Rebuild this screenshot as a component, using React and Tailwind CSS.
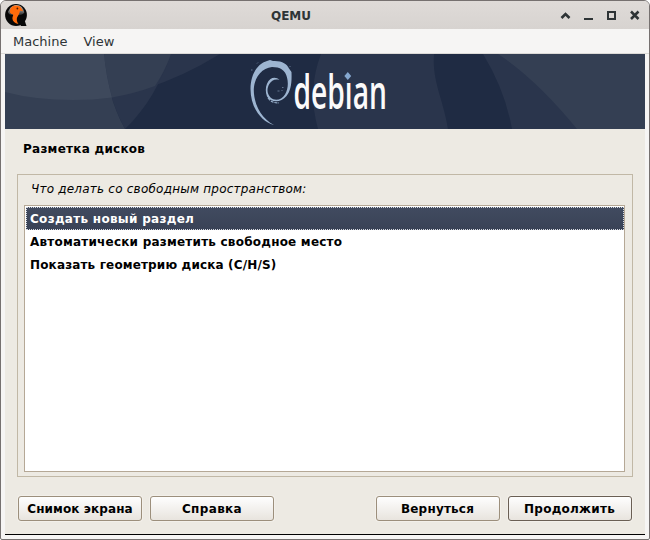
import React from "react";

const OPTIONS = [
  { label: "Создать новый раздел", spacing: "tracking-[0.29px]", selected: true },
  { label: "Автоматически разметить свободное место", spacing: "tracking-[0.22px]" },
  { label: "Показать геометрию диска (C/H/S)", spacing: "tracking-[0.15px]" },
];

function QemuIcon() {
  return (
    <svg width="22" height="22" viewBox="0 0 22 22" className="block">
      <defs>
        <linearGradient id="gloss" x1="0" y1="0" x2="0" y2="1">
          <stop offset="0" stopColor="#b8b8b8" />
          <stop offset="0.6" stopColor="#777777" />
          <stop offset="1" stopColor="#2c2c2c" />
        </linearGradient>
      </defs>
      <circle cx="11" cy="11" r="10.9" fill="#080808" />
      <path d="M14 16h5.500l2 6h-5.600z" fill="#080808" />
      <path d="M3 8C5 3 8 1 11.500 1C15.500 1 18.500 4 19.300 8.500C18 10.500 16 11 13 11H7C5 11 3.500 10 3 8z" fill="url(#gloss)" />
      <path d="M5 8.500C4.600 4.500 7 1.700 10.500 1.500C13 1.300 15 2.200 16 3.800C16.800 4.800 17.300 5.500 17.900 7.200C16.500 6.500 15.500 6.500 14.800 6.900C14.800 9.500 13 11.500 12.200 13.200C11.400 15.200 11.700 17.500 13.400 20C9.800 19.300 7.600 17.400 7.400 14.600C7.300 12.800 8.200 11.800 8.200 10.700C7.600 10 5.700 10.300 5 8.500z" fill="#ff6a0a" />
      <circle cx="12.400" cy="4.500" r="0.900" fill="#4a1c00" />
    </svg>
  );
}

function Banner() {
  return (
    <svg width="640" height="75" viewBox="0 0 640 75" className="block">
      <rect width="640" height="75" fill="#1f2b43" />
      <path d="M0 0H215Q140 46 68 46Q30 46 0 38z" fill="#2a354c" />
      <path d="M99 0H166C156 28 142 54 120 75C108 54 101 28 99 0z" fill="#2a354c" />
      <path d="M0 0H99C101 28 108 54 120 75H0z" fill="#343f53" />
      <path d="M99 0H166Q160 17 150 32Q128 40 107 43.500Q101 22 99 0z" fill="#343f53" />
      <path d="M0 0H99Q101 22 107 43.500Q88 46 68 46Q30 46 0 38z" fill="#3e495c" />
      <path d="M316 0Q302 36 313 75H443C438 44 427 28 429 0z" fill="#2a354c" />
      <path d="M478 0Q500 36 507 75H640V0z" fill="#2a354c" />
      <path d="M493 0Q531 25 572 75H640V0z" fill="#343f53" />
      <path
        d="M269 71C256 68 245.500 53 245.500 35C245.500 20 253 9.500 262 7L265 6L268 7C277 6.500 282 10 284 14.500L286.500 18C287 30 285.500 37 281.500 42C276 49 266 49 262 42.500C259.500 36 261 28.500 265.500 25C268 23.200 272 23.200 274.500 26C270 24.500 266.500 26.500 264.300 30C261.500 35 262 40 265.500 43.500C270 47.500 276.500 46 280 40.500C283 35.500 283.500 29 282 23.500C280.500 16 275 13 267 13C257 14 249.500 23 248.800 35C248.500 51 257 65 269 71z"
        fill="#9db5d1"
      />
      <g fill="none" stroke="#9db5d1">
        <path d="M263 44Q267 49.500 274 48.800" strokeWidth="1.200" strokeDasharray="3 1" />
        <path d="M277 33.500h1.500M272.500 37h2M277 36v1M246 16h1.500M252 9.500l1-1M284.500 12.500h1" strokeWidth="0.900" strokeOpacity="0.600" />
      </g>
      <text
        x="288.500"
        y="55.300"
        textLength="93.500"
        lengthAdjust="spacingAndGlyphs"
        fontSize="46.500"
        fontWeight="600"
        fill="#fbfafa"
        fontFamily="'Open Sans', 'Noto Sans', sans-serif"
      >
        debian
      </text>
      <rect x="338.800" y="17" width="8.500" height="11.300" fill="#2a354c" />
      <path d="M342.800 18l3.400 4-3.400 4-3.400-4z" fill="#86a8d0" />
    </svg>
  );
}

function Button({ children, spacing, strong = false }) {
  return (
    <div
      className={
        "flex h-[25px] w-[124px] items-center justify-center rounded-[3px] border bg-linear-to-b from-[#fefefe] to-[#e8e4de] text-[12px] font-bold shadow-[0_0_0_1px_#f3f0ea] " +
        (strong ? "border-[#6a5f54]" : "border-[#9c8f7c]")
      }
    >
      <span className={spacing}>{children}</span>
    </div>
  );
}

export default function App() {
  return (
    <div className="h-[540px] w-[650px] bg-white font-['DejaVu_Sans','Liberation_Sans',sans-serif] text-black">
      <div className="flex h-[540px] w-[650px] flex-col overflow-hidden rounded-t-[6px] rounded-b-[2px] border border-[#767170] bg-[#f6f5f4]">
        <header className="flex h-7 items-center bg-linear-to-b from-[#dfdbd8] to-[#d7d3d0] pr-[9px] pl-1">
          <QemuIcon />
          <div className="flex-1 pt-px pr-[5px] text-center text-[12px] font-bold text-[#2e3436]">QEMU</div>
          <svg width="80" height="14" viewBox="0 0 80 14" fill="none" stroke="#2e3436" className="block">
            <path d="M1.500 10L5.500 6L9.500 10" strokeWidth="2.600" />
            <path d="M24 11h9" strokeWidth="2" />
            <path d="M48 4h7v7h-7z" strokeWidth="2" />
            <path d="M71 3.500l7.500 7.500M78.500 3.500L71 11" strokeWidth="2.500" />
          </svg>
        </header>
        <nav className="flex h-[25px] items-center gap-4 border-b border-[#dcdad7] pt-[2px] pl-3 text-[13px] text-[#2e3436]">
          <span>Machine</span>
          <span>View</span>
        </nav>
        <main className="mx-1 flex h-[481px] flex-col border-b border-black bg-[#edeae3]">
          <Banner />
          <h1 className="mt-3 ml-[18px] h-4 text-[12px] leading-4 font-bold tracking-[0.25px]">Разметка дисков</h1>
          <section className="mx-3 mt-[17px] flex h-[303px] flex-col border border-[#c1b8a6] px-[6px]">
            <p className="mt-[6px] ml-[7px] h-4 text-[12px] leading-4 tracking-[0.22px] italic">Что делать со свободным пространством:</p>
            <ul className="mt-2 mr-px h-[267px] border border-[#b5a896] bg-white p-px pr-0">
              {OPTIONS.map((o) => (
                <li
                  key={o.label}
                  className={
                    "flex h-[23px] items-center pl-1 text-[12px] font-bold whitespace-nowrap " +
                    (o.selected
                      ? "bg-linear-to-b from-[#414b60] to-[#394256] text-white outline-1 -outline-offset-1 outline-dotted outline-[#d5d9e0]"
                      : "text-black")
                  }
                >
                  <span className={o.spacing}>{o.label}</span>
                </li>
              ))}
            </ul>
          </section>
          <footer className="mt-[19px] flex gap-2 px-[13px]">
            <Button spacing="tracking-[0.1px]">Снимок экрана</Button>
            <Button spacing="tracking-[0.35px]">Справка</Button>
            <div className="flex-1" />
            <Button spacing="tracking-[0.2px] pr-px">Вернуться</Button>
            <Button spacing="tracking-[0.25px] pr-px" strong>Продолжить</Button>
          </footer>
        </main>
      </div>
    </div>
  );
}
